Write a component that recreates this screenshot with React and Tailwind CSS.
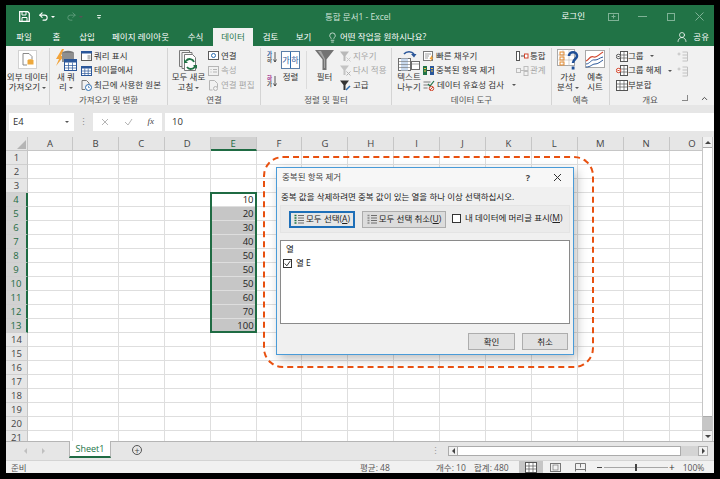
import { Undo2, Redo2, Lightbulb, UserRound, ChevronUp } from 'lucide-react';

const rowNums = Array.from({ length: 21 }, (_, i) => i + 1);
const colNames = ['A', 'B', 'C', 'D', 'E', 'F', 'G', 'H', 'I', 'J', 'K', 'L', 'M', 'N', 'O'];
const values = { 4: 10, 5: 20, 6: 30, 7: 40, 8: 50, 9: 50, 10: 50, 11: 60, 12: 70, 13: 100 };

const tabs = [
  ['파일', 'w-[36px]'],
  ['홈', 'w-[29px]'],
  ['삽입', 'w-[32px]'],
  ['페이지 레이아웃', 'w-[75px]'],
  ['수식', 'w-[35px]'],
];

function Ico({ w = 10, h = 10, children, className = '' }) {
  return (
    <svg width={w} height={h} viewBox={`0 0 ${w} ${h}`} fill="none" className={`shrink-0 ${className}`}>
      {children}
    </svg>
  );
}

function Caret({ className = '' }) {
  return <span className={`inline-block w-0 h-0 border-x-[2px] border-x-transparent border-t-[2px] border-t-[#555] align-middle ${className}`} />;
}

function Row({ icon, label, off, caret, gap = 'gap-[2px]' }) {
  return (
    <div className={`flex items-center h-[14.5px] ${gap} ${off ? 'text-[#a6a6a6]' : 'text-[#333]'}`}>
      {icon}
      <span className="whitespace-nowrap">{label}</span>
      {caret && <Caret className="ml-[6px]" />}
    </div>
  );
}

function Tall({ icon, lines, className = '' }) {
  return (
    <div className={`flex flex-col items-center shrink-0 ${className}`}>
      <div className="h-[24px] flex items-center justify-center">{icon}</div>
      <div className="leading-[10px] text-center text-[#333] whitespace-nowrap">
        {lines.map((l, i) => <div key={i}>{l}</div>)}
      </div>
    </div>
  );
}

function Group({ w, label, children, className = '' }) {
  return (
    <div className={`flex flex-col shrink-0 h-[57px] border-r border-[#d4d4d4] ${w}`}>
      <div className={`flex flex-1 min-h-0 ${className}`}>{children}</div>
      <div className="h-[11px] shrink-0 leading-[11px] text-center text-[#555]">{label}</div>
    </div>
  );
}

const Table = ({ c = '#2b579a' }) => (
  <Ico w={11} h={10}>
    <rect x=".5" y=".5" width="10" height="9" fill="#fff" stroke={c} />
    <rect x="0" y="0" width="11" height="2.5" fill={c} />
    <path d="M3.8 2.5V10M7.2 2.5V10M0 5h11M0 7.5h11" stroke={c} strokeWidth=".7" />
  </Ico>
);

const ShowQ = () => (
  <Ico w={11} h={10}>
    <rect x=".5" y=".5" width="10" height="9" fill="#fff" stroke="#5b5b5b" />
    <rect x="0" y="0" width="11" height="2.5" fill="#2b579a" />
    <rect x="6.5" y="4" width="3" height="4.5" fill="#bdbdbd" />
  </Ico>
);

const Recent = () => (
  <Ico w={11} h={11}>
    <path d="M1 .5h4.5L8 3v3M1 .5V9.5h3" stroke="#6d6d6d" strokeWidth=".9" />
    <circle cx="7.5" cy="7.5" r="3" fill="#fff" stroke="#2b6cb0" />
    <path d="M7.5 5.8v1.8h1.4" stroke="#2b6cb0" strokeWidth=".7" />
  </Ico>
);

const NewQuery = () => (
  <Ico w={22} h={22}>
    <path d="M7 0 1 10h3l-3 7 8-10H6l3-7z" fill="#f2a33a" />
    <ellipse cx="13" cy="4" rx="6" ry="2.2" fill="#7a7a7a" />
    <path d="M7 4h12v9H7z" fill="#8f8f8f" />
    <rect x="9.5" y="10.5" width="12" height="11" fill="#fff" stroke="#2b579a" />
    <rect x="9.5" y="10.5" width="12" height="3" fill="#2b579a" />
    <path d="M13.5 13.5v8M17.5 13.5v8M9.5 16.5h12M9.5 19h12" stroke="#2b579a" strokeWidth=".7" />
  </Ico>
);

const ExtData = () => (
  <div className="w-[19px] h-[19px] -mt-[2px] bg-white border border-[#d2d2d2] flex items-center justify-center">
    <Ico w={12} h={13}>
      <path d="M1 .5h6L10 3.5v3M1 .5V12h4" stroke="#7d7d7d" strokeWidth=".9" />
      <ellipse cx="8.5" cy="7.5" rx="3" ry="1.3" fill="#eda83c" />
      <path d="M5.5 7.5h6v4h-6z" fill="#eda83c" />
    </Ico>
  </div>
);

const Refresh = () => (
  <Ico w={20} h={21}>
    <path d="M.5 .5h10v16H.5z" fill="#f1f1f1" stroke="#7a7a7a" />
    <path d="M3 2.5h10v16H3z" fill="#f7f7f7" stroke="#7a7a7a" />
    <path d="M5.5 4.5h8l3 3v13h-11z" fill="#fff" stroke="#7a7a7a" />
    <path d="M15 12a4.5 4.5 0 0 0-8-1M8 17a4.5 4.5 0 0 0 8-1" stroke="#217346" strokeWidth="1.8" />
    <path d="M5 9v4h4zM18 19v-4h-4z" fill="#217346" />
  </Ico>
);

const Conn = () => (
  <Ico w={11} h={10}>
    <rect x=".5" y=".5" width="10" height="8" fill="#fff" stroke="#5b5b5b" />
    <circle cx="5.5" cy="4.5" r="2" stroke="#2b6cb0" />
  </Ico>
);

const Props = () => (
  <Ico w={11} h={10}>
    <rect x=".5" y=".5" width="10" height="9" stroke="#b5b5b5" />
    <path d="M2.5 3.5h1M5 3.5h4M2.5 6h1M5 6h4" stroke="#b5b5b5" />
  </Ico>
);

const EditLink = () => (
  <Ico w={11} h={11}>
    <path d="M1.5 .5h5l3 3v4M1.5 .5v9.500h3" stroke="#b5b5b5" />
    <circle cx="7.500" cy="8.500" r="2" stroke="#b5b5b5" />
  </Ico>
);

const SortIco = ({ top, bottom, c }) => (
  <div className="flex items-center h-[14px] gap-[1px]">
    <div className="flex flex-col text-[5.500px] leading-[6.500px] font-bold">
      <span className={c}>{top}</span>
      <span className="text-[#555]">{bottom}</span>
    </div>
    <Ico w={4} h={12}>
      <path d="M2 1v10M.5 8.500 2 11l1.500-2.500" stroke="#444" strokeWidth=".9" />
    </Ico>
  </div>
);

const SortBig = () => (
  <div className="w-[19px] h-[18px] border border-[#5b7fa8] bg-white flex">
    <div className="flex-1 border-r border-[#2b6cb0] text-[#2b579a] text-[8px] leading-[16px] text-center">가</div>
    <div className="flex-1 text-[#2b579a] text-[8px] leading-[16px] text-center">하</div>
  </div>
);

const Funnel = () => (
  <Ico w={19} h={20}>
    <path d="M0 0h19L11.500 9.500V20h-4V9.500z" fill="#737373" />
    <path d="M3 1h3L10 9v9H9V9.500z" fill="#a5a5a5" />
  </Ico>
);

const SmallFunnel = ({ c = '#b8b8b8', mark = '#c9c9c9' }) => (
  <Ico w={11} h={11}>
    <path d="M0 .5h9L5.500 5v5h-2V5z" fill={c} />
    <path d="M6.500 6.500l4 4M10.500 6.500l-4 4" stroke={mark} />
  </Ico>
);

const Advanced = () => (
  <Ico w={11} h={11}>
    <path d="M0 .5h9L5.500 5v5h-2V5z" fill="#333" />
    <path d="M6 10l4-4" stroke="#2b6cb0" strokeWidth="1.500" />
  </Ico>
);

const TextCols = () => (
  <Ico w={22} h={22}>
    <path d="M6 5a6 5 0 0 1 10 0" stroke="#2b579a" strokeWidth="1.600" />
    <path d="M13 5h5.500l-2.500 3.500z" fill="#2b579a" />
    <rect x=".5" y="9.500" width="12" height="12" fill="#fff" stroke="#6d6d6d" />
    <rect x="3" y="9.500" width="7" height="12" fill="#c8d9ee" />
    <path d="M.5 12.500h12M.5 15.500h12M.5 18.500h12" stroke="#6d6d6d" strokeWidth=".6" />
    <rect x="13.500" y="12.500" width="8" height="8" fill="#fff" stroke="#6d6d6d" />
    <path d="M13.500 15h8" stroke="#6d6d6d" strokeWidth=".6" />
  </Ico>
);

const Flash = () => (
  <Ico w={11} h={11}>
    <rect x=".5" y=".5" width="9" height="9" fill="#fff" stroke="#7a7a7a" />
    <path d="M2 3h6M2 5h4M2 7h3" stroke="#7a7a7a" strokeWidth=".7" />
    <path d="M9 4 6.500 8H8L7 11l3.500-4.500H9z" fill="#f2a33a" />
  </Ico>
);

const Dup = () => (
  <Ico w={11} h={11}>
    <rect x="0" y="1" width="4" height="9" fill="#217346" />
    <rect x="7" y="1" width="4" height="9" fill="#2b579a" />
    <path d="M1 3.500h2M1 6h2M8 3.500h2M8 6h2" stroke="#f4c542" />
    <path d="M4 5.500h3" stroke="#333" />
  </Ico>
);

const Valid = () => (
  <Ico w={12} h={11}>
    <path d="M.5 2h7M.5 5h5M.5 8h4" stroke="#7a7a7a" />
    <path d="M5 4l2 2 4-5" stroke="#217346" strokeWidth="1.200" />
    <circle cx="8.500" cy="8.500" r="2.200" stroke="#d2452c" />
    <path d="M7 10l3-3" stroke="#d2452c" />
  </Ico>
);

const Consol = () => (
  <Ico w={13} h={10}>
    <rect x=".5" y=".5" width="3" height="9" fill="#fff" stroke="#555" />
    <path d="M5 5h3" stroke="#555" />
    <rect x="8.500" y="3" width="3.500" height="4" fill="#fff" stroke="#d2452c" />
  </Ico>
);

const Rel = () => (
  <Ico w={13} h={10}>
    <rect x=".5" y="2.500" width="4" height="4" stroke="#bdbdbd" />
    <rect x="8" y=".5" width="4" height="4" stroke="#bdbdbd" />
    <rect x="8" y="5.500" width="4" height="4" stroke="#bdbdbd" />
    <path d="M4.500 4.500H8" stroke="#bdbdbd" />
  </Ico>
);

const WhatIf = () => (
  <Ico w={22} h={22}>
    <rect x=".5" y=".5" width="17" height="16" fill="#fff" stroke="#a8a8a8" />
    <path d="M6 .5v16M12 .5v16M.5 6h17M.5 11h17" stroke="#c4c4c4" strokeWidth=".7" />
    <rect x="3" y="3" width="4" height="3" stroke="#e58a2c" />
    <rect x="3" y="8" width="4" height="3" stroke="#e58a2c" />
    <rect x="3" y="13" width="4" height="3" stroke="#e58a2c" />
    <path d="M12 7c0-5 8-5 8 0 0 3-4 3-4 7" stroke="#1f4e96" strokeWidth="2.600" />
    <rect x="14.700" y="17.500" width="2.800" height="3" fill="#1f4e96" />
  </Ico>
);

const Forecast = () => (
  <Ico w={20} h={20}>
    <rect x=".5" y=".5" width="19" height="17" fill="#fff" stroke="#a8a8a8" />
    <path d="M1 11c4-1 3-6 8-4 3 1 4-2 9-5" stroke="#d2452c" strokeWidth="1.200" />
    <path d="M1 14c4 0 5-5 9-4 3 0 4-2 8-3M1 17c5 0 6-3 9-3 3 0 5-2 8-4" stroke="#2b579a" strokeWidth="1" />
  </Ico>
);

const GroupIco = ({ mark }) => (
  <Ico w={12} h={11}>
    <rect x="4.500" y=".5" width="7" height="10" fill="#fff" stroke="#555" />
    <path d="M8 .5v10M4.500 4h7M4.500 7h7" stroke="#555" strokeWidth=".7" />
    <circle cx="2.500" cy="5.500" r="2.200" fill="#fff" stroke={mark ? '#d2452c' : '#555'} />
    <path d="M1.500 5.500h2" stroke={mark ? '#d2452c' : '#555'} />
  </Ico>
);

const Subtotal = () => (
  <Ico w={12} h={11}>
    <rect x=".5" y=".5" width="11" height="10" fill="#fff" stroke="#555" />
    <path d="M4 .5v10M8 .5v10M.5 4h11M.5 7h11" stroke="#555" strokeWidth=".7" />
  </Ico>
);

const Detail = () => (
  <Ico w={11} h={11}>
    <path d="M5.500 1h5v9h-5M5.500 4h5M5.500 7h5" stroke="#c2c2c2" />
    <path d="M.5 3h3M2 1.500v3" stroke="#c2c2c2" />
  </Ico>
);

function TitleBar() {
  return (
    <div className="h-[23px] shrink-0 flex items-center relative text-[#cfe3d8]">
      <div className="flex items-center pl-[13px] gap-[5px] text-white">
        <Ico w={11} h={11}>
          <path d="M.7.700h8l1.600 1.600v8H.7z" stroke="#fff" strokeWidth="1.300" />
          <path d="M3 1v3h4V1M3 10V6.500h5V10" stroke="#fff" />
        </Ico>
        <Undo2 size={11} strokeWidth={2.400} className="ml-[3px]" />
        <Caret className="border-t-white -ml-[3px]" />
        <Redo2 size={11} strokeWidth={2} className="ml-[6px] text-[#5f9c7c]" />
        <Caret className="border-t-[#5f9c7c] -ml-[3px]" />
        <span className="ml-[9px] flex flex-col items-center gap-[1px]">
          <span className="w-[4px] h-[1px] bg-[#d5e6dc]" />
          <Caret className="border-t-[#d5e6dc]" />
        </span>
      </div>
      <span className="absolute left-[319px] top-[6px] leading-[11px] whitespace-nowrap">통합 문서1 - Excel</span>
      <div className="ml-auto flex items-center">
        <span className="text-white mr-[23px]">로그인</span>
        <Ico w={11} h={8} className="mr-[19px]">
          <rect x=".5" y=".5" width="10" height="7" stroke="#7fb296" />
          <path d="M5.500 1.500v4M3.500 3.500h4" stroke="#7fb296" />
        </Ico>
        <span className="w-[9px] h-[1px] bg-[#7fb296] mr-[20px]" />
        <span className="w-[8px] h-[8px] border border-[#7fb296] mr-[20px]" />
        <Ico w={9} h={9} className="mr-[10px]">
          <path d="M.5.500l8 8M8.500.500l-8 8" stroke="#7fb296" />
        </Ico>
      </div>
    </div>
  );
}

function TabBar() {
  return (
    <div className="h-[18px] shrink-0 flex items-stretch text-white leading-[18px]">
      {tabs.map(([t, w]) => <div key={t} className={`text-center ${w}`}>{t}</div>)}
      <div className="w-[40px] bg-[#f1f1f1] text-[#217346] text-center">데이터</div>
      <div className="w-[35px] text-center">검토</div>
      <div className="w-[31px] text-center">보기</div>
      <div className="flex items-center ml-[8px] gap-[2px]">
        <Lightbulb size={11} strokeWidth={1.500} />
        <span>어떤 작업을 원하시나요?</span>
      </div>
      <div className="ml-auto flex items-center pr-[5px] gap-[5px]">
        <UserRound size={12} strokeWidth={1.500} />
        <span>공유</span>
      </div>
    </div>
  );
}

function Ribbon() {
  return (
    <div className="h-[59px] shrink-0 bg-[#f1f1f1] flex pt-[2px] text-[#444] relative">
      <Group w="w-[44px]" className="justify-center">
        <Tall icon={<ExtData />} lines={['외부 데이터', <>가져오기 <Caret key="c" /></>]} />
      </Group>
      <Group w="w-[118px]" label="가져오기 및 변환" className="pl-[5px] gap-[4px]">
        <Tall icon={<NewQuery />} lines={['새 쿼', <>리 <Caret key="c" /></>]} className="w-[22px]" />
        <div className="pt-[1px]">
          <Row icon={<ShowQ />} label="쿼리 표시" />
          <Row icon={<Table />} label="테이블에서" />
          <Row icon={<Recent />} label="최근에 사용한 원본" />
        </div>
      </Group>
      <Group w="w-[93px]" label="연결" className="pl-[4px] gap-[3px]">
        <Tall icon={<Refresh />} lines={['모두 새로', <>고침 <Caret key="c" /></>]} className="w-[33px]" />
        <div className="pt-[1px]">
          <Row icon={<Conn />} label="연결" />
          <Row icon={<Props />} label="속성" off />
          <Row icon={<EditLink />} label="연결 편집" off />
        </div>
      </Group>
      <Group w="w-[131px]" label="정렬 및 필터" className="pl-[6px]">
        <div className="flex flex-col gap-[10px] pt-[2px] w-[14px]">
          <SortIco top="가" bottom="하" c="text-[#2b579a]" />
          <SortIco top="하" bottom="가" c="text-[#a3308e]" />
        </div>
        <Tall icon={<SortBig />} lines={['정렬']} className="w-[19px]" />
        <span className="w-[1px] h-[38px] bg-[#dcdcdc] ml-[6px] mt-[3px]" />
        <Tall icon={<Funnel />} lines={['필터']} className="w-[19px] ml-[8px]" />
        <div className="pt-[1px] ml-[6px]">
          <Row icon={<SmallFunnel />} label="지우기" off />
          <Row icon={<SmallFunnel c="#c4c4c4" mark="#b0b0b0" />} label="다시 적용" off />
          <Row icon={<Advanced />} label="고급" />
        </div>
      </Group>
      <Group w="w-[160px]" label="데이터 도구" className="pl-[5px] gap-[2px]">
        <Tall icon={<TextCols />} lines={['텍스트', '나누기']} className="w-[24px]" />
        <div className="pt-[1px] w-[91px]">
          <Row icon={<Flash />} label="빠른 채우기" />
          <Row icon={<Dup />} label="중복된 항목 제거" />
          <Row icon={<Valid />} label="데이터 유효성 검사" caret />
        </div>
        <div className="pt-[1px]">
          <Row icon={<Consol />} label="통합" gap="gap-[1px]" />
          <Row icon={<Rel />} label="관계" off gap="gap-[1px]" />
        </div>
      </Group>
      <Group w="w-[58px]" label="예측" className="pl-[4px] gap-[5px]">
        <Tall icon={<WhatIf />} lines={['가상', <>분석 <Caret key="c" /></>]} className="w-[24px]" />
        <Tall icon={<Forecast />} lines={['예측', '시트']} className="w-[20px]" />
      </Group>
      <Group w="w-[80px] border-r-0" label="개요" className="pl-[6px]">
        <div className="pt-[1px] w-[61px]">
          <Row icon={<GroupIco />} label="그룹" caret gap="gap-0" />
          <Row icon={<GroupIco mark />} label="그룹 해제" caret gap="gap-0" />
          <Row icon={<Subtotal />} label="부분합" gap="gap-0" />
        </div>
        <div className="pt-[3px] flex flex-col gap-[4px]">
          <Detail />
          <Detail />
        </div>
      </Group>
      <span className="absolute right-[26px] bottom-[4px] w-[6px] h-[6px] border-b border-r border-[#888]" />
      <ChevronUp size={9} strokeWidth={2.500} className="absolute right-[5px] bottom-[2px] text-[#444]" />
    </div>
  );
}

function FormulaBar() {
  return (
    <div className="h-[32px] shrink-0 bg-[#e6e6e6] flex items-start pt-[8px] pl-[3px] text-[#333]">
      <div className="w-[65px] h-[18px] bg-white flex items-center px-[4px] text-[9.500px]">
        E4
        <Caret className="ml-auto mr-[1px]" />
      </div>
      <div className="w-[19px] h-[18px] flex items-center justify-center text-[#8a8a8a] leading-none">⋮</div>
      <div className="w-[69px] h-[18px] bg-white flex items-center justify-between px-[8px] text-[#b5b5b5]">
        <Ico w={8} h={8}><path d="M1 1l6 6M7 1 1 7" stroke="#b5b5b5" /></Ico>
        <Ico w={9} h={8}><path d="M1 4l3 3 4-6" stroke="#b5b5b5" /></Ico>
        <span className="text-[#444] italic text-[9px] font-['Liberation_Serif',serif]">fx</span>
      </div>
      <div className="flex-1 h-[18px] bg-white ml-[3px] flex items-center pl-[7px] text-[9.500px]">10</div>
    </div>
  );
}

function Cell({ r, i }) {
  const inCol = i === 4;
  const sel = inCol && r >= 5 && r <= 13;
  return (
    <div className={`relative border-r border-b border-[#dedede] text-right pr-[2px] leading-[14px] text-[9.500px] text-[#222] ${sel ? 'bg-[#c6c6c6]' : 'bg-white'}`}>
      {inCol && values[r]}
      {inCol && r === 4 && (
        <span className="absolute -left-[1px] -top-[1px] w-[47px] h-[141px] border-2 border-[#1f6b43] z-10" />
      )}
    </div>
  );
}

function Sheet() {
  return (
    <div className="flex-1 flex min-h-0">
      <div className="w-[696px] overflow-hidden">
        <div className="grid grid-cols-[22px_45px_repeat(14,45.900px)] auto-rows-[14px] text-[9.500px] text-[#444]">
          <div className="bg-[#e6e6e6] border-r border-b border-[#c6c6c6] flex items-end justify-end p-[1px]">
            <span className="w-0 h-0 border-l-[9px] border-l-transparent border-b-[9px] border-b-[#b5b5b5]" />
          </div>
          {colNames.map(c => (
            <div key={c} className={`text-center leading-[13px] border-r border-[#c6c6c6] ${c === 'E' ? 'bg-[#d2d2d2] border-b-2 border-b-[#1f6b43] text-[#1f6b43]' : 'bg-[#e6e6e6] border-b border-b-[#c6c6c6]'}`}>{c}</div>
          ))}
          {rowNums.map(r => {
            const on = r >= 4 && r <= 13;
            return [
              <div key={`h${r}`} className={`text-center leading-[14px] border-b border-[#cfcfcf] ${on ? 'bg-[#d2d2d2] text-[#1f6b43] border-r-2 border-r-[#1f6b43]' : 'bg-[#e6e6e6] border-r border-r-[#c6c6c6]'}`}>{r}</div>,
              ...colNames.map((c, i) => <Cell key={`${c}${r}`} r={r} i={i} />),
            ];
          })}
        </div>
      </div>
      <div className="w-[12px] bg-[#f1f1f1] pr-[1px]">
        <div className="h-full flex flex-col border-x border-[#c6c6c6]">
          <div className="h-[11px] bg-[#f1f1f1] border-b border-[#ababab] flex items-center justify-center">
            <span className="w-0 h-0 border-x-[3px] border-x-transparent border-b-[3px] border-b-[#444]" />
          </div>
          <div className="flex-1 bg-white border-b border-[#ababab]" />
          <div className="h-[13px] bg-[#c6c6c6]" />
          <div className="h-[11px] bg-[#f1f1f1] border-t border-[#ababab] flex items-center justify-center">
            <span className="w-0 h-0 border-x-[3px] border-x-transparent border-t-[3px] border-t-[#444]" />
          </div>
        </div>
      </div>
    </div>
  );
}

function SheetTabs() {
  return (
    <div className="h-[19px] shrink-0 bg-[#e6e6e6] border-t border-[#b5b5b5] flex items-start">
      <span className="ml-[18px] mt-[6px] w-0 h-0 border-y-[3px] border-y-transparent border-r-[3px] border-r-[#c0c0c0]" />
      <span className="ml-[15px] mt-[6px] w-0 h-0 border-y-[3px] border-y-transparent border-l-[3px] border-l-[#c0c0c0]" />
      <div className="ml-[24px] -mt-[1px] w-[42px] h-[17px] bg-white border-x border-[#b5b5b5] border-b-2 border-b-[#1f6b43] text-[#217346] text-center text-[9px] leading-[15px]">Sheet1</div>
      <div className="ml-[21px] mt-[3px] w-[10px] h-[10px] rounded-full border border-[#555] flex items-center justify-center text-[9px] leading-none text-[#444]">+</div>
      <span className="ml-[289px] mt-[3px] text-[#999] leading-[11px]">⋮</span>
      <div className="ml-[8px] mt-[4px] w-[260px] h-[10px] flex">
        <div className="w-[10px] bg-[#f1f1f1] border border-[#ababab] flex items-center justify-center">
          <span className="w-0 h-0 border-y-[3px] border-y-transparent border-r-[3px] border-r-[#444]" />
        </div>
        <div className="w-[223px] bg-white border-y border-r border-[#ababab]" />
        <div className="w-[17px] bg-[#d4d4d4]" />
        <div className="w-[10px] bg-[#f1f1f1] border border-[#ababab] flex items-center justify-center">
          <span className="w-0 h-0 border-y-[3px] border-y-transparent border-l-[3px] border-l-[#444]" />
        </div>
      </div>
    </div>
  );
}

function StatusBar() {
  return (
    <div className="h-[13px] shrink-0 bg-[#f1f1f1] flex items-center text-[#555] leading-[13px] border-t border-[#d4d4d4]">
      <span className="ml-[5px] w-[349px]">준비</span>
      <span className="w-[76px]">평균: 48</span>
      <span className="w-[38px]">개수: 10</span>
      <span className="w-[45px]">합계: 480</span>
      <div className="w-[24px] h-[13px] bg-[#c6c6c6] flex items-center justify-center">
        <Subtotal />
      </div>
      <div className="w-[25px] flex justify-center">
        <Ico w={11} h={9}><rect x=".5" y=".5" width="10" height="8" stroke="#777" /><rect x="3" y="2" width="5" height="5" stroke="#777" strokeWidth=".7" /></Ico>
      </div>
      <div className="w-[24px] flex justify-center">
        <Ico w={11} h={9}><path d="M.5 8.500V.5h10v8M.5 6.500h10M5.500.5v4" stroke="#777" /></Ico>
      </div>
      <span className="ml-[5px] w-[5px] h-[1px] bg-[#444]" />
      <div className="relative ml-[2px] w-[64px] h-[1px] bg-[#a6a6a6]">
        <span className="absolute left-[31px] -top-[3px] w-[2px] h-[7px] bg-[#444]" />
      </div>
      <span className="ml-[1px] text-[#333] text-[10px] leading-none">+</span>
      <span className="ml-[8px]">100%</span>
    </div>
  );
}

function Check({ checked }) {
  return (
    <span className="w-[9px] h-[9px] border border-[#333] bg-white flex items-center justify-center shrink-0">
      {checked && <Ico w={7} h={7}><path d="M.8 3.500 2.800 5.800 6.400.8" stroke="#333" /></Ico>}
    </span>
  );
}

const ListIco = ({ c }) => (
  <Ico w={10} h={11}>
    <path d="M4 1.500h6M4 4h6M4 6.500h6M4 9h6" stroke="#6d6d6d" />
    <path d="M.5 1.500h2M.5 4h2M.5 6.500h2M.5 9h2" stroke={c} strokeWidth="1.400" />
  </Ico>
);

function Dialog() {
  return (
    <div className="absolute left-[276px] top-[167px] w-[298px] h-[188px] z-20 bg-[#f0f0f0] border border-[#4a9bd8] shadow-[3px_4px_10px_rgba(0,0,0,0.25)] flex flex-col text-[#222]">
      <div className="h-[19px] flex items-center pl-[5px] bg-[#f7f7f7] text-[#444] shrink-0">
        <span>중복된 항목 제거</span>
        <span className="ml-auto mr-[23px] font-bold text-[9px]">?</span>
        <Ico w={9} h={9} className="mr-[11px]"><path d="M1 1l7 7M8 1 1 8" stroke="#333" /></Ico>
      </div>
      <div className="pl-[4px] pt-[3px] h-[18px] leading-[13px] shrink-0">중복 값을 삭제하려면 중복 값이 있는 열을 하나 이상 선택하십시오.</div>
      <div className="mx-[3px] h-[28px] bg-[#ebebeb] border border-[#e4e4e4] flex items-center pl-[8px] shrink-0">
        <div className="w-[66px] h-[17px] bg-[#e6e6e6] border-2 border-[#1e6fb8] flex items-center justify-center gap-[2px]">
          <ListIco c="#217346" />
          <span className="whitespace-nowrap">모두 선택(<span className="underline">A</span>)</span>
        </div>
        <div className="ml-[7px] w-[84px] h-[17px] bg-[#dcdcdc] border border-[#adadad] flex items-center justify-center gap-[2px]">
          <ListIco c="#8a8a8a" />
          <span className="whitespace-nowrap">모두 선택 취소(<span className="underline">U</span>)</span>
        </div>
        <div className="ml-[6px] flex items-center gap-[4px] -mt-[2px]">
          <Check />
          <span className="whitespace-nowrap">내 데이터에 머리글 표시(<span className="underline">M</span>)</span>
        </div>
      </div>
      <div className="mx-[3px] mt-[7px] h-[84px] bg-white border border-[#8a8a8a] px-[1px] shrink-0">
        <div className="pl-[4px] h-[16px] leading-[15px]">열</div>
        <div className="flex items-center gap-[4px] h-[13px] pl-[1px]">
          <Check checked />
          <span>열 E</span>
        </div>
      </div>
      <div className="flex justify-end gap-[7px] pr-[5px] mt-[9px]">
        <div className="w-[47px] h-[17px] bg-[#e1e1e1] border border-[#adadad] text-center leading-[15px]">확인</div>
        <div className="w-[46px] h-[17px] bg-[#e1e1e1] border border-[#adadad] text-center leading-[15px]">취소</div>
      </div>
    </div>
  );
}

export default function App() {
  return (
    <div className="relative w-[720px] h-[479px] bg-black overflow-hidden pl-[6px] pt-[5px] text-[8.500px] font-['Open_Sans','Noto_Sans_CJK_KR',sans-serif]">
      <div className="w-[708px] h-[468px] flex flex-col bg-[#217346] overflow-hidden">
        <TitleBar />
        <TabBar />
        <Ribbon />
        <FormulaBar />
        <Sheet />
        <SheetTabs />
        <StatusBar />
      </div>
      <Dialog />
      <div className="absolute left-[263px] top-[156px] w-[331px] h-[212px] z-30 rounded-[20px] border-2 border-dashed border-[#e8500f]" />
    </div>
  );
}
